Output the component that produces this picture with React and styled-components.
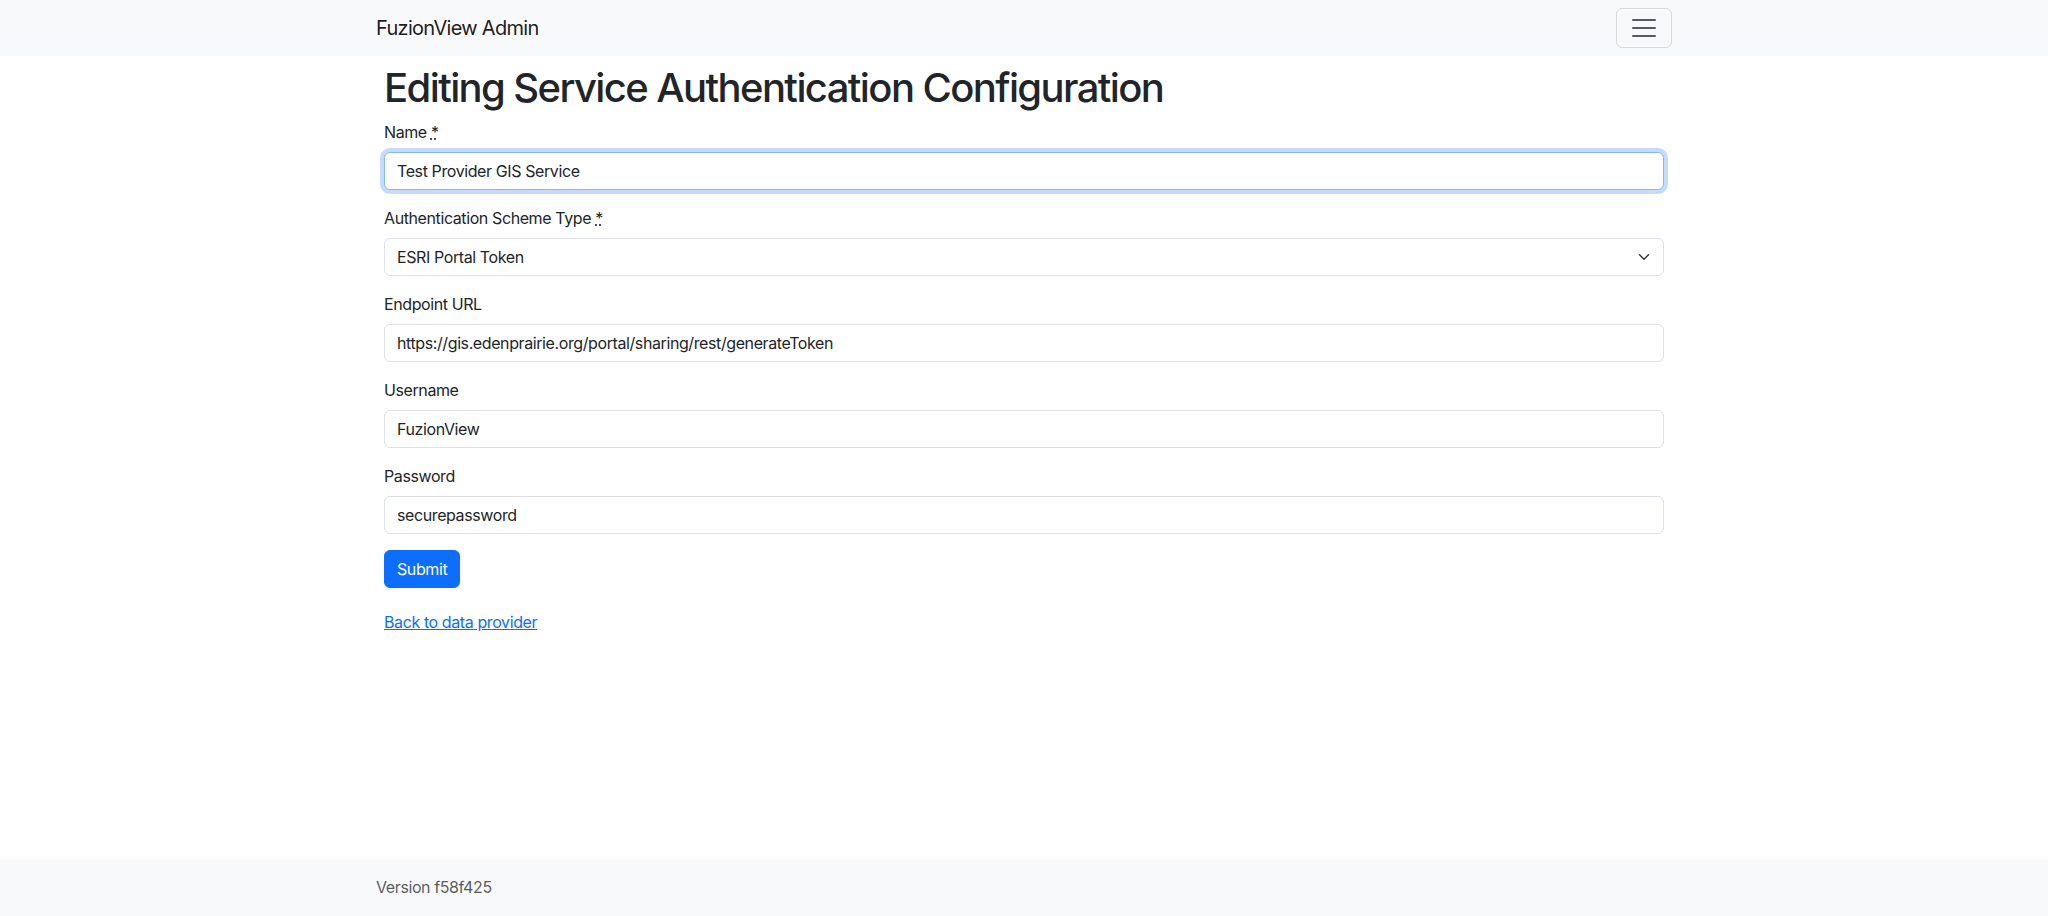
import React, { useRef, useEffect } from "react";
import styled, { createGlobalStyle } from "styled-components";

const GlobalStyle = createGlobalStyle`
  *, *::before, *::after {
    box-sizing: border-box;
  }
  html, body {
    margin: 0;
    padding: 0;
    height: 100%;
  }
  body {
    font-family: Inter, "Noto Sans", "Liberation Sans", sans-serif;
    font-size: 16px;
    line-height: 1.5;
    letter-spacing: -0.4px;
    color: #212529;
    background: #fff;
  }
  #root {
    height: 100%;
  }
`;

const Page = styled.div`
  display: flex;
  flex-direction: column;
  min-height: 100vh;
`;

const Container = styled.div`
  width: 100%;
  max-width: 1320px;
  margin: 0 auto;
  padding: 0 12px;
`;

const Navbar = styled.nav`
  background: #f8f9fa;
  padding: 8px 0;
`;

const NavInner = styled(Container)`
  display: flex;
  align-items: center;
  justify-content: space-between;
`;

const Brand = styled.a`
  font-size: 20px;
  line-height: 30px;
  padding: 5px 0;
  letter-spacing: -0.7px;
  color: rgba(0, 0, 0, 0.9);
  text-decoration: none;
`;

const Toggler = styled.button`
  display: flex;
  align-items: center;
  justify-content: center;
  padding: 4px 12px;
  background: transparent;
  border: 1px solid rgba(33, 37, 41, 0.15);
  border-radius: 6px;
  cursor: pointer;
`;

const Main = styled.main`
  padding: 8px 8px 0;
`;

const Title = styled.h1`
  margin: 0 0 8px;
  font-size: 40px;
  font-weight: 500;
  line-height: 1.2;
  letter-spacing: -1.6px;
`;

const Field = styled.div`
  margin-bottom: 16px;
`;

const Label = styled.label`
  display: inline-block;
  margin-bottom: 8px;
`;

const Required = styled.abbr`
  text-decoration: underline dotted;
  text-decoration-skip-ink: none;
  cursor: help;
`;

const Input = styled.input`
  display: block;
  width: 100%;
  height: 38px;
  padding: 6px 12px;
  font: inherit;
  font-size: 16px;
  line-height: 1.5;
  letter-spacing: -0.4px;
  color: #212529;
  background: #fff;
  border: 1px solid ${(props) => (props.focused ? "#86b7fe" : "#dee2e6")};
  border-radius: 6px;
  box-shadow: ${(props) =>
    props.focused ? "0 0 0 4px rgba(13, 110, 253, 0.25)" : "none"};
  outline: none;

  &:focus {
    border-color: #86b7fe;
    box-shadow: 0 0 0 4px rgba(13, 110, 253, 0.25);
  }
`;

const SelectWrap = styled.div`
  position: relative;
`;

const Select = styled.select`
  display: block;
  width: 100%;
  height: 38px;
  padding: 6px 36px 6px 12px;
  font: inherit;
  font-size: 16px;
  line-height: 1.5;
  letter-spacing: -0.4px;
  color: #212529;
  background: #fff;
  border: 1px solid #dee2e6;
  border-radius: 6px;
  appearance: none;
  outline: none;
`;

const Chevron = styled.svg`
  position: absolute;
  right: 12px;
  top: 50%;
  margin-top: -6px;
  width: 16px;
  height: 12px;
  pointer-events: none;
`;

const SubmitButton = styled.button`
  display: inline-block;
  padding: 6px 12px;
  font: inherit;
  font-size: 16px;
  line-height: 1.5;
  letter-spacing: -0.4px;
  color: #fff;
  background: #0d6efd;
  border: 1px solid #0d6efd;
  border-radius: 6px;
  cursor: pointer;
`;

const BackLink = styled.a`
  display: inline-block;
  margin-top: 22px;
  color: #0d6efd;
  text-decoration: underline;
`;

const Footer = styled.footer`
  margin-top: auto;
  background: #f8f9fa;
  line-height: 57px;
  color: rgba(33, 37, 41, 0.75);
  white-space: nowrap;
`;

const fields = [
  { id: "url", label: "Endpoint URL", value: "https://gis.edenprairie.org/portal/sharing/rest/generateToken" },
  { id: "username", label: "Username", value: "FuzionView" },
  { id: "password", label: "Password", value: "securepassword" },
];

function App() {
  const nameRef = useRef(null);

  useEffect(() => {
    const el = nameRef.current;
    if (el) {
      el.focus();
      el.setSelectionRange(el.value.length, el.value.length);
    }
  }, []);

  return (
    <Page>
      <GlobalStyle />
      <Navbar>
        <NavInner>
          <Brand href="#">FuzionView Admin</Brand>
          <Toggler aria-label="Toggle navigation">
            <svg width="30" height="30" viewBox="0 0 30 30">
              <path
                d="M4 7h22M4 15h22M4 23h22"
                stroke="rgba(33,37,41,0.75)"
                strokeWidth="2"
                strokeLinecap="round"
                strokeMiterlimit="10"
              />
            </svg>
          </Toggler>
        </NavInner>
      </Navbar>

      <Container>
        <Main>
          <Title>Editing Service Authentication Configuration</Title>
          <form onSubmit={(e) => e.preventDefault()}>
            <Field>
              <Label htmlFor="name">
                Name <Required title="required">*</Required>
              </Label>
              <Input
                id="name"
                ref={nameRef}
                focused
                defaultValue="Test Provider GIS Service"
              />
            </Field>
            <Field>
              <Label htmlFor="scheme">
                Authentication Scheme Type <Required title="required">*</Required>
              </Label>
              <SelectWrap>
                <Select id="scheme" defaultValue="esri">
                  <option value="esri">ESRI Portal Token</option>
                </Select>
                <Chevron viewBox="0 0 16 16" preserveAspectRatio="xMidYMid meet">
                  <path
                    d="m2 5 6 6 6-6"
                    fill="none"
                    stroke="#343a40"
                    strokeWidth="2"
                    strokeLinecap="round"
                    strokeLinejoin="round"
                  />
                </Chevron>
              </SelectWrap>
            </Field>
            {fields.map((f) => (
              <Field key={f.id}>
                <Label htmlFor={f.id}>{f.label}</Label>
                <Input id={f.id} defaultValue={f.value} />
              </Field>
            ))}
            <SubmitButton type="submit">Submit</SubmitButton>
          </form>
          <BackLink href="#">Back to data provider</BackLink>
        </Main>
      </Container>

      <Footer>
        <Container>Version f58f425</Container>
      </Footer>
    </Page>
  );
}

export default App;
